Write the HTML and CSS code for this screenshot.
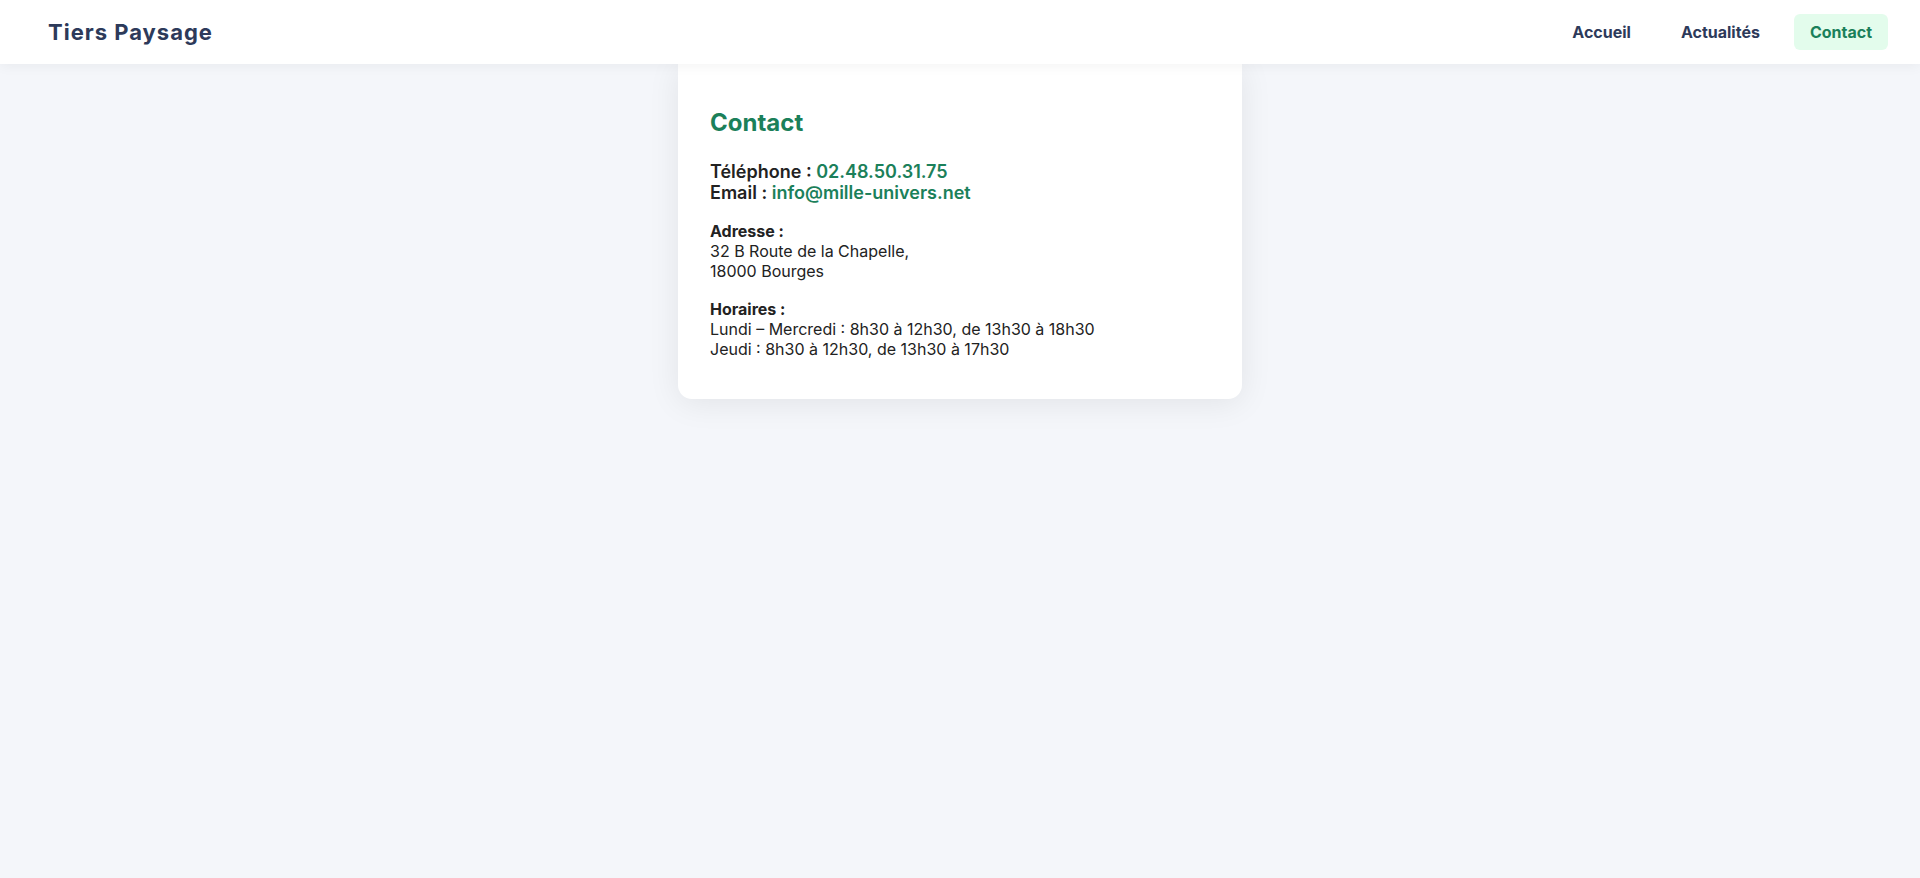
FILE: index.html
```html
<!DOCTYPE html>
<html lang="fr">
<head>
<meta charset="utf-8">
<meta name="viewport" content="width=device-width, initial-scale=1">
<title>Tiers Paysage – Contact</title>
<link rel="stylesheet" href="styles.css">
</head>
<body>
<header class="site-header">
  <div class="site-title">Tiers Paysage</div>
  <nav class="site-nav">
    <a class="nav-link" href="#accueil">Accueil</a>
    <a class="nav-link" href="#actualites">Actualités</a>
    <a class="nav-link nav-link-active" href="#contact" aria-current="page">Contact</a>
  </nav>
</header>
<main class="contact-card">
  <h1 class="card-title">Contact</h1>
  <p class="contact-lines"><strong>Téléphone :</strong> <a class="contact-link" href="tel:0248503175">02.48.50.31.75</a><br><strong>Email :</strong> <a class="contact-link" href="mailto:info@mille-univers.net">info@mille-univers.net</a></p>
  <p class="info"><strong>Adresse :</strong><br>32 B Route de la Chapelle,<br>18000 Bourges</p>
  <p class="info"><strong>Horaires :</strong><br>Lundi – Mercredi : 8h30 à 12h30, de 13h30 à 18h30<br>Jeudi : 8h30 à 12h30, de 13h30 à 17h30</p>
</main>
</body>
</html>
```
FILE: styles.css
```css
* { box-sizing: border-box; }
body {
  min-height: 100vh;
  margin: 0;
  background: #f4f6fa;
  color: #222;
  font-family: Inter, "Liberation Sans", sans-serif;
  font-size: 16px;
  line-height: 20px;
}
.site-header {
  position: relative;
  z-index: 1;
  display: flex;
  align-items: center;
  justify-content: space-between;
  padding: 14px 32px 14px 48px;
  background: #fff;
  box-shadow: 0 2px 12px rgba(0, 0, 0, 0.05);
}
.site-title {
  color: #2d3a5a;
  font-size: 22px;
  line-height: 28px;
  font-weight: 700;
  letter-spacing: 1px;
}
.site-nav { display: flex; gap: 18px; }
.nav-link {
  padding: 8px 16px;
  border-radius: 6px;
  color: #2d3a5a;
  font-weight: 700;
  text-decoration: none;
}
.nav-link-active { background: #e3fcec; color: #1b805a; }
.contact-card {
  max-width: 564px;
  margin: 0 auto;
  padding: 40px 32px;
  border-radius: 0 0 14px 14px;
  background: #fff;
  box-shadow: 0 4px 32px rgba(0, 0, 0, 0.08);
}
.card-title {
  margin: 0 0 20px;
  color: #1b805a;
  font-size: 24px;
  line-height: 37px;
  font-weight: 700;
}
.contact-lines {
  margin: 0 0 18px;
  font-size: 18px;
  line-height: 21px;
  font-weight: 600;
}
.contact-lines strong { font-weight: 600; }
.contact-link { color: #1b805a; text-decoration: none; }
.info { margin: 0 0 18px; }
.info:last-child { margin-bottom: 0; }
.info strong { font-weight: 700; }
```
